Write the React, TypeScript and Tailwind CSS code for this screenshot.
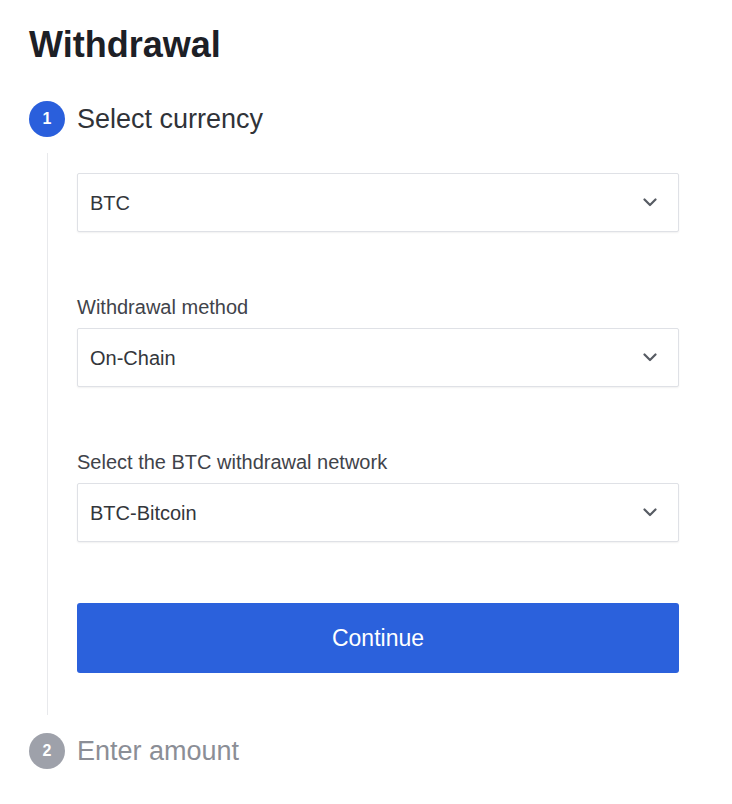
const font = { fontFamily: '"Liberation Sans", Arial, sans-serif' };

function Chevron() {
  return (
    <svg width="14" height="9" viewBox="0 0 14 9" fill="none" className="shrink-0">
      <path d="M1.5 1.5L7 7L12.5 1.5" stroke="#575b63" strokeWidth="2.2" strokeLinecap="round" strokeLinejoin="round" />
    </svg>
  );
}

function SelectBox({ value }: { value: string }) {
  return (
    <div className="flex h-[59px] w-[602px] items-center justify-between rounded-[2px] border border-[#dfe1e6] bg-white pl-3 pr-[21px] shadow-[0_1px_2px_rgba(0,0,0,0.06)]">
      <span className="text-[20px] leading-6 text-[#33363b]">{value}</span>
      <Chevron />
    </div>
  );
}

function Field({ label, value }: { label: string; value: string }) {
  return (
    <div className="mt-[63px] flex flex-col">
      <label className="mb-[9px] text-[20px] leading-6 text-[#3f434a]">{label}</label>
      <SelectBox value={value} />
    </div>
  );
}

function StepBadge({ n, active }: { n: number; active?: boolean }) {
  return (
    <div
      className={
        active
          ? 'flex h-9 w-9 shrink-0 items-center justify-center rounded-full bg-[#2a5fdc] text-[16px] font-bold text-white'
          : 'flex h-9 w-9 shrink-0 items-center justify-center rounded-full bg-[#9ea1aa] text-[16px] font-bold text-white'
      }
    >
      {n}
    </div>
  );
}

export default function App() {
  return (
    <div className="min-h-[804px] w-[732px] bg-white pl-[29px] pt-[27px]" style={font}>
      <h1 className="text-[36px] font-bold leading-[36px] text-[#1d2026]">Withdrawal</h1>

      <div className="mt-[38px] flex items-center gap-3">
        <StepBadge n={1} active />
        <span className="text-[27px] leading-9 text-[#303338]">Select currency</span>
      </div>

      <div className="ml-[18px] mt-4 border-l border-[#e8e9ec] pb-[42px] pl-[29px] pt-5">
        <SelectBox value="BTC" />
        <Field label="Withdrawal method" value="On-Chain" />
        <Field label="Select the BTC withdrawal network" value="BTC-Bitcoin" />
        <button
          type="button"
          className="mt-[61px] flex h-[70px] w-[602px] items-center justify-center rounded-[3px] bg-[#2b61dc] text-[23px] text-white"
        >
          Continue
        </button>
      </div>

      <div className="mt-[18px] flex items-center gap-3">
        <StepBadge n={2} />
        <span className="text-[27px] leading-9 text-[#8b8e96]">Enter amount</span>
      </div>
    </div>
  );
}
